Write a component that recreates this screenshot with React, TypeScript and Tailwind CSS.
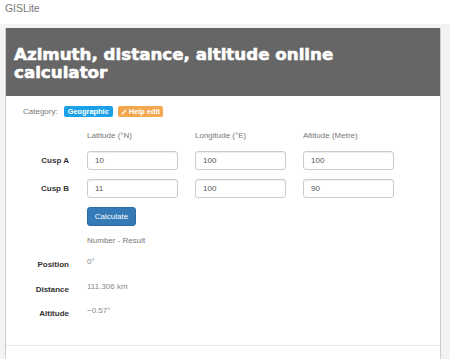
import React from 'react';

const columns = ['Latitude (°N)', 'Longitude (°E)', 'Altitude (Metre)'];

const cusps = [
  { label: 'Cusp A', values: ['10', '100', '100'] },
  { label: 'Cusp B', values: ['11', '100', '90'] },
];

const results = [
  { label: 'Position', value: '0°' },
  { label: 'Distance', value: '111.306 km' },
  { label: 'Altitude', value: '−0.57°' },
];

function Pencil() {
  return (
    <svg width="6" height="6" viewBox="0 0 12 12" className="shrink-0">
      <path d="M1 11 L1.6 8.4 L8.6 1.4 L10.6 3.4 L3.6 10.4 Z" fill="white" />
    </svg>
  );
}

export default function App() {
  return (
    <div className="w-[450px] h-[359px] overflow-hidden bg-white font-['Liberation_Sans',Arial,sans-serif]">
      {/* navbar */}
      <div className="h-[24px] px-[5px] pt-[3px]">
        <span className="block text-[10.4px] leading-[12px] text-[#777]">GISLite</span>
      </div>

      <div className="h-[335px] bg-[#f3f3f3] pt-[4px] pl-[5px]">
        <div className="w-[436px] h-[340px] bg-white border-x border-[#cfcfcf] flex flex-col">
          <div className="h-[68px] bg-[#666] pl-[8px] pt-[17px]">
            <h1 className="font-['DejaVu_Sans',sans-serif] font-bold text-[16.7px] leading-[18px] text-white [-webkit-text-stroke:0.6px_white]">
              Azimuth, distance, altitude online
              <br />
              calculator
            </h1>
          </div>

          <div className="h-[249px] text-[8px] leading-[10px]">
            <div className="mt-[10px] pl-[17px] flex items-center h-[11px]">
              <span className="text-[#777] mr-[6px]">Category:</span>
              <span className="h-[11px] px-[4px] flex items-center bg-[#1da1e6] text-white font-bold text-[7.4px] rounded-[2px]">
                Geographic
              </span>
              <span className="ml-[5px] h-[11px] px-[3px] flex items-center gap-[2px] bg-[#f3a84f] text-white font-bold text-[7.4px] rounded-[2px]">
                <Pencil />
                Help edit
              </span>
            </div>

            <div className="mt-[14px] flex h-[10px]">
              <div className="w-[81px] shrink-0" />
              <div className="flex gap-[17px]">
                {columns.map((c) => (
                  <div key={c} className="w-[91px] text-[#777]">
                    {c}
                  </div>
                ))}
              </div>
            </div>

            {cusps.map((row, i) => (
              <div key={row.label} className={`${i === 0 ? 'mt-[10px]' : 'mt-[9px]'} flex items-center h-[19px]`}>
                <div className="w-[63px] shrink-0 text-right font-bold text-[#333]">{row.label}</div>
                <div className="ml-[18px] flex gap-[17px]">
                  {row.values.map((v, j) => (
                    <input
                      key={j}
                      type="text"
                      defaultValue={v}
                      className="w-[91px] h-[19px] px-[7px] border border-[#ccc] rounded-[3px] text-[8px] text-[#555] bg-white shadow-[inset_0_1px_1px_rgba(0,0,0,0.075)] outline-none"
                    />
                  ))}
                </div>
              </div>
            ))}

            <div className="mt-[9px] flex">
              <div className="w-[81px] shrink-0" />
              <button className="w-[49px] h-[19px] bg-[#337ab7] border border-[#2e6da4] rounded-[3px] text-white text-[8px] leading-[10px]">
                Calculate
              </button>
            </div>

            <div className="mt-[10px] flex h-[10px]">
              <div className="w-[81px] shrink-0" />
              <div className="text-[#777]">Number - Result</div>
            </div>

            <div className="mt-[10px]">
              {results.map((r) => (
                <div key={r.label} className="flex h-[24.5px]">
                  <div className="w-[63px] shrink-0 pt-[4px] text-right font-bold text-[#333]">{r.label}</div>
                  <div className="ml-[18px] pt-[1px] text-[#888]">{r.value}</div>
                </div>
              ))}
            </div>
          </div>

          <div className="flex-1 border-t border-[#e6e6e6]" />
        </div>
      </div>
    </div>
  );
}
